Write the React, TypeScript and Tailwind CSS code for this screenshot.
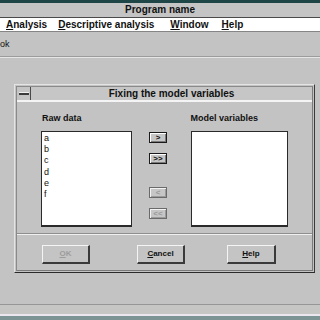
import React from "react";

const U = ({ c }: { c: string }) => <span className="underline underline-offset-[1px]">{c}</span>;

function ArrowBtn({ label, disabled }: { label: string; disabled?: boolean }) {
  return (
    <div
      className={
        "w-[18px] h-[11px] flex items-center justify-center text-[8px] font-bold leading-none bg-[#c6c6c6] border " +
        (disabled
          ? "border-[#6a6a6a] text-[#9a9a9a] shadow-[inset_1px_1px_0_#f2f2f2,inset_-1px_-1px_0_#9a9a9a]"
          : "border-[#1a1a1a] text-[#111] shadow-[inset_1px_1px_0_#ffffff,inset_-1px_-1px_0_#7a7a7a]")
      }
    >
      {label}
    </div>
  );
}

function DlgBtn({ children, w, disabled }: { children: React.ReactNode; w: string; disabled?: boolean }) {
  return (
    <div
      className={
        w +
        " h-[19px] flex items-center justify-center text-[8px] font-bold leading-none bg-[#c4c4c4] border-t border-l border-t-[#f4f4f4] border-l-[#f4f4f4] border-r-2 border-b-2 border-r-[#3a3a3a] border-b-[#3a3a3a] " +
        (disabled ? "text-[#9c9c9c]" : "text-[#111]")
      }
    >
      {children}
    </div>
  );
}

export default function App() {
  const items = ["a", "b", "c", "d", "e", "f"];
  return (
    <div
      className="w-[320px] h-[320px] overflow-hidden flex flex-col bg-[#c3c3c3] text-[#111]"
      style={{ fontFamily: '"Liberation Sans", Arial, sans-serif' }}
    >
      {/* top teal strip */}
      <div className="h-[3px] bg-[#1e4646] shrink-0" />
      {/* title bar */}
      <div className="h-[15px] shrink-0 flex items-center justify-center text-[10px] font-bold leading-none border-b border-[#4a4a4a] bg-[#c4c4c4]">
        Program name
      </div>
      {/* menu bar */}
      <div className="h-[14px] shrink-0 flex items-center bg-white border-b border-[#858585] text-[10px] font-bold leading-none">
        <span className="ml-[6px]"><U c="A" />nalysis</span>
        <span className="ml-[11px]"><U c="D" />escriptive analysis</span>
        <span className="ml-[16px]"><U c="W" />indow</span>
        <span className="ml-[13px]"><U c="H" />elp</span>
      </div>
      {/* toolbar */}
      <div className="h-[25px] shrink-0 flex items-center border-b border-[#9c9c9c] text-[9px] leading-none">
        <span className="ml-0">ok</span>
      </div>
      {/* MDI area */}
      <div className="flex-1 border-t border-[#e6e6e6] bg-[#c3c3c3]">
        <div className="ml-[14px] mt-[26px] w-[301px] h-[189px] border border-t-[#e4e4e4] border-l-[#e4e4e4] border-r-[#3a3a3a] border-b-[#2a2a2a] p-[1px] bg-[#c3c3c3]">
          <div className="w-full h-full border border-t-[#8a8a8a] border-l-[#8a8a8a] border-r-[#7a7a7a] border-b-[#7a7a7a] flex flex-col">
            {/* caption */}
            <div className="h-[15px] shrink-0 flex border-b-2 border-[#f4f4f4]">
              <div className="w-[14px] h-full border-r border-[#4a4a4a] flex items-center justify-center bg-[#c4c4c4]">
                <div className="w-[10px] h-[3px] bg-[#3a3a3a] border-t border-[#f0f0f0]" />
              </div>
              <div className="flex-1 flex items-center justify-center text-[10px] font-bold leading-none bg-[#c6c6c6]">
                Fixing the model variables
              </div>
            </div>
            {/* body */}
            <div className="flex-1 flex flex-col pt-[11px]">
              <div className="h-[11px] flex items-center text-[9px] font-bold leading-none">
                <span className="ml-[25px]">Raw data</span>
                <span className="ml-[109px]">Model variables</span>
              </div>
              <div className="mt-[7px] h-[96px] flex items-start">
                <div className="ml-[24px] w-[91px] h-[96px] bg-white border border-[#2a2a2a] border-b-2 pt-[1px] pl-[2px] text-[9px] leading-[11.2px]">
                  {items.map((it) => (
                    <div key={it}>{it}</div>
                  ))}
                </div>
                <div className="ml-[17px] flex flex-col pt-[1px]">
                  <ArrowBtn label=">" />
                  <div className="h-[10px]" />
                  <ArrowBtn label=">>" />
                  <div className="h-[23px]" />
                  <ArrowBtn label="<" disabled />
                  <div className="h-[10px]" />
                  <ArrowBtn label="<<" disabled />
                </div>
                <div className="ml-[24px] w-[97px] h-[96px] bg-white border border-[#2a2a2a] border-b-2" />
              </div>
              <div className="mt-[6px] h-[2px] border-t border-[#8e8e8e] border-b border-b-[#f0f0f0]" />
              <div className="mt-[10px] flex">
                <div className="ml-[25px]">
                  <DlgBtn w="w-[48px]" disabled>
                    <span><U c="O" />K</span>
                  </DlgBtn>
                </div>
                <div className="ml-[47px]">
                  <DlgBtn w="w-[48px]">
                    <span><U c="C" />ancel</span>
                  </DlgBtn>
                </div>
                <div className="ml-[42px]">
                  <DlgBtn w="w-[49px]">
                    <span><U c="H" />elp</span>
                  </DlgBtn>
                </div>
              </div>
            </div>
          </div>
        </div>
      </div>
      {/* bottom strips */}
      <div className="h-[1px] shrink-0 bg-[#969696]" />
      <div className="h-[9px] shrink-0 bg-[#c6c6c4]" />
      <div className="h-[2px] shrink-0 bg-[#ece6ee]" />
      <div className="h-[4px] shrink-0 bg-[#7d9494]" />
    </div>
  );
}
